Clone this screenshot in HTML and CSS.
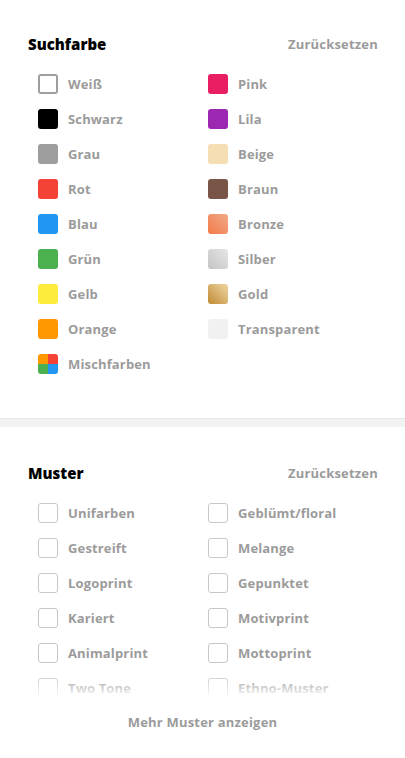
FILE: index.html
```html
<!DOCTYPE html>
<html lang="de">
<head>
<meta charset="utf-8">
<link rel="stylesheet" href="styles.css">
</head>
<body>
<section class="section colors">
  <div class="head"><h2 class="title">Suchfarbe</h2><span class="reset">Zurücksetzen</span></div>
  <div class="grid">
    <div class="item"><span class="sw sw-white"></span><span class="lbl">Weiß</span></div>
    <div class="item"><span class="sw sw-pink"></span><span class="lbl">Pink</span></div>
    <div class="item"><span class="sw sw-black"></span><span class="lbl">Schwarz</span></div>
    <div class="item"><span class="sw sw-lila"></span><span class="lbl">Lila</span></div>
    <div class="item"><span class="sw sw-grau"></span><span class="lbl">Grau</span></div>
    <div class="item"><span class="sw sw-beige"></span><span class="lbl">Beige</span></div>
    <div class="item"><span class="sw sw-rot"></span><span class="lbl">Rot</span></div>
    <div class="item"><span class="sw sw-braun"></span><span class="lbl">Braun</span></div>
    <div class="item"><span class="sw sw-blau"></span><span class="lbl">Blau</span></div>
    <div class="item"><span class="sw sw-bronze"></span><span class="lbl">Bronze</span></div>
    <div class="item"><span class="sw sw-gruen"></span><span class="lbl">Grün</span></div>
    <div class="item"><span class="sw sw-silber"></span><span class="lbl">Silber</span></div>
    <div class="item"><span class="sw sw-gelb"></span><span class="lbl">Gelb</span></div>
    <div class="item"><span class="sw sw-gold"></span><span class="lbl">Gold</span></div>
    <div class="item"><span class="sw sw-orange"></span><span class="lbl">Orange</span></div>
    <div class="item"><span class="sw sw-trans"></span><span class="lbl">Transparent</span></div>
    <div class="item"><span class="sw sw-mix"><i class="q q1"></i><i class="q q2"></i><i class="q q3"></i><i class="q q4"></i></span><span class="lbl">Mischfarben</span></div>
  </div>
</section>
<div class="divider"></div>
<section class="section patterns">
  <div class="head"><h2 class="title">Muster</h2><span class="reset">Zurücksetzen</span></div>
  <div class="clip">
    <div class="grid">
      <div class="item"><span class="cb"></span><span class="lbl">Unifarben</span></div>
      <div class="item"><span class="cb"></span><span class="lbl">Geblümt/floral</span></div>
      <div class="item"><span class="cb"></span><span class="lbl">Gestreift</span></div>
      <div class="item"><span class="cb"></span><span class="lbl">Melange</span></div>
      <div class="item"><span class="cb"></span><span class="lbl">Logoprint</span></div>
      <div class="item"><span class="cb"></span><span class="lbl">Gepunktet</span></div>
      <div class="item"><span class="cb"></span><span class="lbl">Kariert</span></div>
      <div class="item"><span class="cb"></span><span class="lbl">Motivprint</span></div>
      <div class="item"><span class="cb"></span><span class="lbl">Animalprint</span></div>
      <div class="item"><span class="cb"></span><span class="lbl">Mottoprint</span></div>
      <div class="item"><span class="cb"></span><span class="lbl">Two Tone</span></div>
      <div class="item"><span class="cb"></span><span class="lbl">Ethno-Muster</span></div>
    </div>
    <div class="fade"></div>
  </div>
  <div class="more">Mehr Muster anzeigen</div>
</section>
</body>
</html>
```

FILE: styles.css
```css
* { box-sizing: border-box; }
html, body { margin: 0; padding: 0; background: #fff; }
body {
  width: 405px;
  font-family: "Open Sans", Lato, "Liberation Sans", sans-serif;
  -webkit-font-smoothing: antialiased;
}
.section { padding: 34px 27px 0 28px; }
.colors { padding-bottom: 37px; }
.head {
  display: flex;
  justify-content: space-between;
  align-items: center;
  height: 20px;
}
.title {
  margin: 0;
  font-size: 15px;
  font-weight: 800;
  color: #000;
  letter-spacing: 0;
}
.reset {
  font-size: 13px;
  font-weight: 700;
  color: #9b9b9b;
  letter-spacing: 0.2px;
}
.grid {
  display: grid;
  grid-template-columns: 170px 170px;
  grid-auto-rows: 35px;
  margin-top: 12px;
  padding-left: 10px;
}
.item {
  display: flex;
  align-items: center;
  gap: 10px;
}
.lbl {
  font-size: 13px;
  font-weight: 700;
  color: #9b9b9b;
  letter-spacing: 0.15px;
}
.sw {
  width: 20px;
  height: 20px;
  border-radius: 3px;
  flex: none;
  display: inline-block;
}
.sw-white { border: 2px solid #9e9e9e; background: #fff; }
.sw-black { background: #000; }
.sw-grau { background: #9e9e9e; }
.sw-rot { background: #f44336; }
.sw-blau { background: #2196f3; }
.sw-gruen { background: #4caf50; }
.sw-gelb { background: #ffeb3b; }
.sw-orange { background: #ff9800; }
.sw-pink { background: #e91e63; }
.sw-lila { background: #9c27b0; }
.sw-beige { background: #f5deb3; }
.sw-braun { background: #795548; }
.sw-bronze { background: linear-gradient(to top right, #f47a4a, #f0aa86); }
.sw-silber { background: linear-gradient(to top right, #c4c4c4, #e6e6e6); }
.sw-gold { background: linear-gradient(to top right, #c08b35, #efd6a2); }
.sw-trans { background: #f1f1f1; }
.sw-mix {
  display: grid;
  grid-template-columns: 1fr 1fr;
  grid-template-rows: 1fr 1fr;
  overflow: hidden;
}
.q { display: block; }
.q1 { background: #ff9800; }
.q2 { background: #f44336; }
.q3 { background: #4caf50; }
.q4 { background: #2196f3; }
.divider {
  height: 9px;
  background: #f2f2f2;
  border-top: 1px solid #e6e6e6;
}
.patterns { padding-top: 36px; }
.cb {
  width: 20px;
  height: 20px;
  border: 1.5px solid #c8c8c8;
  border-radius: 3px;
  flex: none;
  background: #fff;
}
.clip {
  position: relative;
  height: 215px;
  overflow: hidden;
}
.fade {
  position: absolute;
  left: 0;
  right: 0;
  bottom: 0;
  height: 24px;
  background: linear-gradient(to bottom, rgba(255,255,255,0.1), rgba(255,255,255,0.35) 40%, rgba(255,255,255,0.85) 85%, #fff);
}
.more {
  text-align: center;
  font-size: 13px;
  font-weight: 700;
  color: #9b9b9b;
  letter-spacing: 0.2px;
  margin-top: 15px;
  padding-right: 1px;
}
```
